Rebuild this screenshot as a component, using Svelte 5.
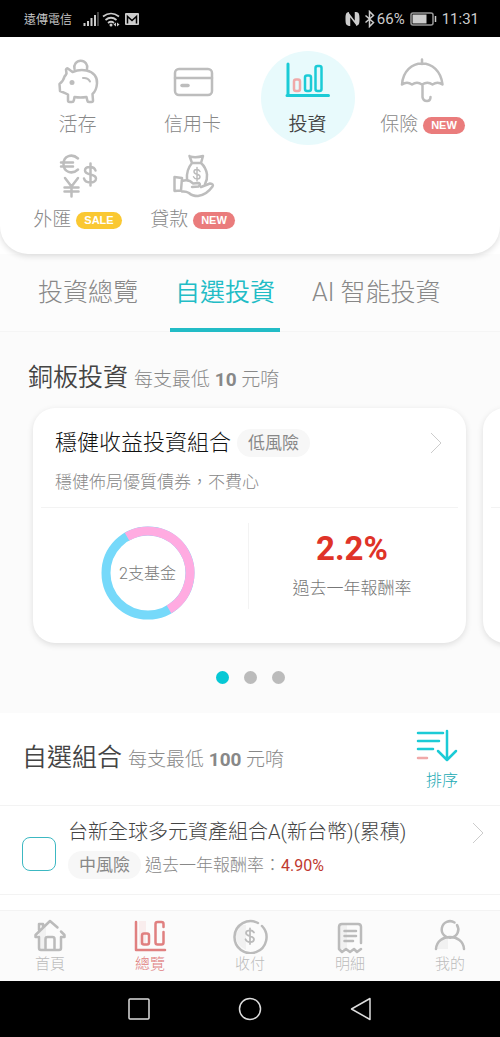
<script lang="ts">
	const services = [
		{ id: 'deposit', name: '活存' },
		{ id: 'card', name: '信用卡' },
		{ id: 'invest', name: '投資', active: true },
		{ id: 'insurance', name: '保險', badge: 'NEW' },
		{ id: 'forex', name: '外匯', badge: 'SALE' },
		{ id: 'loan', name: '貸款', badge: 'NEW' }
	];

	const tabs = ['投資總覽', '自選投資', 'AI 智能投資'];
	let activeTab = $state(1);
	let slide = $state(0);

	const funds = [
		{ id: 'fund-1', name: '台新全球多元資產組合A(新台幣)(累積)', risk: '中風險', rate: '4.90%' }
	];

	const navItems = [
		{ id: 'home', name: '首頁' },
		{ id: 'overview', name: '總覽' },
		{ id: 'pay', name: '收付' },
		{ id: 'detail', name: '明細' },
		{ id: 'me', name: '我的' }
	];
</script>

{#snippet chevron()}
	<svg class="chevron" viewBox="0 0 12 22" aria-hidden="true"><path d="M1 1l10 10L1 21" /></svg>
{/snippet}

<div class="app">
	<header class="status-bar">
		<div class="status-side">
			<span class="carrier">遠傳電信</span>
			<svg width="56" height="16" viewBox="0 0 56 16" aria-hidden="true">
				<path d="M1.5 12v3M5 10v5M8.5 7v8M12 4v11" stroke="#ccc" stroke-width="2" fill="none" />
				<path d="M15 1v14" stroke="#555" stroke-width="1.6" />
				<g fill="none" stroke="#ccc" stroke-width="1.7">
					<path d="M20 5.500q8-6 16 0M22.500 9q5.500-4.500 11 0M25 12q3-2.500 6 0" />
				</g>
				<circle cx="28" cy="14" r="1.500" fill="#ccc" />
				<path d="M33 11.500v4l-2.500-2zM34 11.500v4l2.500-2z" fill="#ccc" />
				<rect x="42" y="2" width="14" height="12" rx="1" fill="#ccc" />
				<path d="M44.500 12.500V5.500l4.500 4 4.500-4v7" fill="none" stroke="#000" stroke-width="1.500" />
			</svg>
		</div>
		<div class="status-side right">
			<svg width="32" height="18" viewBox="0 0 32 18" aria-hidden="true">
				<path d="M4 2C1 2.500.500 4 .500 9s.500 6 3.500 7zM11 2c3 .500 3.500 2 3.500 7s-.500 6-3.500 7z" fill="#ccc" />
				<path d="M4.500 16V5l6 8V2" fill="none" stroke="#ccc" stroke-width="1.500" />
				<path d="M20.500 5.500l8 7-4 4v-15l4 4-8 7" fill="none" stroke="#ccc" stroke-width="1.500" />
			</svg>
			<span>66%</span>
			<svg class="battery" width="27" height="14" viewBox="0 0 27 14" aria-hidden="true">
				<rect x="1" y="1" width="22" height="12" rx="2" fill="none" stroke="#999" stroke-width="1.500" />
				<rect x="2.500" y="2.500" width="14" height="9" fill="#ccc" />
				<path d="M25.500 4v6" stroke="#ccc" stroke-width="1.500" />
			</svg>
			<span>11:31</span>
		</div>
	</header>

	<nav class="services">
		{#each services as item}
			<a href="#{item.id}" class="service" class:active={item.active}>
				<svg class="service-icon" viewBox="0 0 48 48" aria-hidden="true">
					{#if item.id === 'deposit'}
						<path d="M20.500 12a6.500 6.500 0 1 1 12.500 0" />
						<path d="M12 12.500q.5-2 2.500-.5l4 3q7-3 14-1.500c7.500 1.500 11 7 10.500 13-.4 5-2 8.500-4.500 10.500l.5 6.500q0 1.500-1.500 1.500H35q-1.500 0-1.700-1.500L32.500 40q-6 1-12 0l-.7 3.500q-.3 1.500-1.800 1.500h-2.500q-1.500 0-1.500-1.500V37.500c-3-1.500-5.500-2.500-8-3.500L5.500 27q4-3 5-7.500 1.500-1.500 2-3z" />
						<circle class="fill" cx="18" cy="25.500" r="2.500" />
						<path d="M29 21q5-.5 7 3.500" stroke-width="2" />
					{:else if item.id === 'card'}
						<rect x="6" y="12" width="37" height="26" rx="4" />
						<path d="M6 21h37" />
						<path d="M13 28.500h6" stroke-width="3.500" />
					{:else if item.id === 'invest'}
						<path d="M4 7v31.500M3 38.500h41.500" stroke-width="3" />
						<rect class="accent" x="10" y="22.500" width="6" height="11.500" rx="2" />
						<rect x="21" y="18.500" width="6" height="15.500" rx="2" />
						<rect x="31.500" y="9" width="6" height="25" rx="2" />
					{:else if item.id === 'insurance'}
						<path d="M23 2.500V7M3 27.500C4 14 13 6.500 23 6.500s19 7.500 20.500 21q-5-3.500-10 0-5-3.500-10.500 0-5-3.500-10 0-5-3.500-10 0zM23.500 28v12q.5 4 4.500 4 3.500 0 3.500-4" />
					{:else if item.id === 'forex'}
						<path d="M24 6.500C18 1 9.500 4 9.500 12S18 23 24 17.500M7 10.500h12M7 14.500h12" />
						<path d="M11 26l6.500 8.500L24 26M17.500 34.500v10M10.500 35.500h14M10.500 39.500h14" />
						<path d="M41.500 18.500C40 13.500 31 14 31 18.500c0 5.500 11 2.500 11 8 0 5-10.500 5.500-12 0M36.500 11.500v22" />
					{:else}
						<path d="M21 4.500q6 1.500 13-.5l-2 7q5 4.500 6 11.500.5 5-2 9.500M18 28q-1-10 5-17L20.500 4M23.500 11H32" />
						<path d="M5.500 25l7.500 1-1 12.500-6.500.5zM13 29q7-2.500 11 2.500l6-.5q2 1.500-.5 3.500l-6.500.5M32 35l9-3.500q4 .5 2.500 3-6 8.500-14.500 9.500-6 0-9-3-3-2-7-1.500" />
						<path d="M31 19.500C29.500 16.500 25 17 25 19.700c0 3.300 6 1.700 6 5 0 2.800-5 3.300-6.500 0M28 15.500v13.500" stroke-width="1.500" />
					{/if}
				</svg>
				<span class="service-label">
					{item.name}
					{#if item.badge}
						<span class="badge" class:sale={item.badge === 'SALE'}>{item.badge}</span>
					{/if}
				</span>
			</a>
		{/each}
	</nav>

	<main>
		<div class="tabs">
			{#each tabs as tab, i}
				<button class="tab" class:selected={activeTab === i} onclick={() => (activeTab = i)}>{tab}</button>
			{/each}
		</div>

		<section class="starter">
			<h2>銅板投資 <small>每支最低 <b>10</b> 元唷</small></h2>
			<div class="slides">
				<article class="card">
					<a href="#portfolio" class="card-head">
						<div class="card-title">
							<h3>穩健收益投資組合</h3>
							<span class="risk">低風險</span>
							{@render chevron()}
						</div>
						<p>穩健佈局優質債券，不費心</p>
					</a>
					<div class="card-body">
						<div class="chart">
							<svg viewBox="0 0 94 94" aria-hidden="true">
								<circle cx="47" cy="47" r="42" stroke="#76d9fa" />
								<circle cx="47" cy="47" r="42" stroke="#ffabe1" pathLength="100" stroke-dasharray="50 50" transform="rotate(-120 47 47)" />
							</svg>
							<span>2支基金</span>
						</div>
						<div class="return">
							<strong>2.2%</strong>
							<span>過去一年報酬率</span>
						</div>
					</div>
				</article>
				<article class="card">
					<div class="card-head"></div>
				</article>
			</div>
			<div class="dots">
				{#each [0, 1, 2] as n}
					<button class="dot" class:on={slide === n} aria-label="第 {n + 1} 頁" onclick={() => (slide = n)}></button>
				{/each}
			</div>
		</section>

		<section class="picks">
			<div class="picks-head">
				<h2>自選組合 <small>每支最低 <b>100</b> 元唷</small></h2>
				<button class="sort">
					<svg width="42" height="34" viewBox="0 0 42 34" aria-hidden="true">
						<path d="M2 4h25M2 12h21M2 20h15M31 2v28M22 22l9 9 9-9" />
						<path class="accent" d="M2 29h9" />
					</svg>
					排序
				</button>
			</div>
			{#each funds as fund}
				<div class="fund">
					<input type="checkbox" id={fund.id} />
					<div class="fund-info">
						<label for={fund.id}>{fund.name}</label>
						<div class="fund-meta">
							<span class="risk">{fund.risk}</span>
							<span>過去一年報酬率：<em>{fund.rate}</em></span>
						</div>
					</div>
					<a href="#{fund.id}" aria-label={fund.name}>{@render chevron()}</a>
				</div>
			{/each}
		</section>
	</main>

	<nav class="bottom-nav">
		{#each navItems as item}
			<a href="#{item.id}" class:current={item.id === 'overview'}>
				<svg width="36" height="36" viewBox="0 0 36 36" aria-hidden="true">
					{#if item.id === 'home'}
						<path class="shade" d="M7 15l7-7v24H7z" />
						<path d="M25.500 9.500L18 3 3.500 17v2H7v11q0 2 2 2h18q2 0 2-2V19h3.500v-2L29 13.500M7 12V6h4v3M13.500 32V21q0-2 2-2h5q2 0 2 2v11" />
					{:else if item.id === 'overview'}
						<path class="shade" d="M7 3h7v24H7z" />
						<path d="M4 4v28H33" />
						<rect x="10" y="15.500" width="7" height="11" rx="2" />
						<path d="M31.500 9V6q0-2-2-2h-4q-2 0-2 2v18.500q0 2 2 2h4q2 0 2-2V14" />
					{:else if item.id === 'pay'}
						<path class="shade" d="M8 7h6v25q-11-5-10-15z" />
						<path d="M26 5A16 16 0 1 0 30 8" />
						<path d="M22 14.500C20 11 14 12 14 15c0 4 8 2 8 6.300 0 3.500-7 4-8.500 0M18 10.500v15.500" stroke-width="1.800" />
					{:else if item.id === 'detail'}
						<path class="shade" d="M8 7h7v24H8z" />
						<path d="M29 25V9q0-3-3-3H10Q7 6 7 9v22l3 3 4-3 4 3 4-3 3 3 4-3M12.500 13H24M12.500 18H24M12.500 23H21" />
					{:else}
						<path class="shade" d="M5 31q1-10 11-11v11z" />
						<path d="M22.500 4.500A8.300 8.300 0 1 0 25 7M4 31c1-16 27-16 28 0" />
					{/if}
				</svg>
				{item.name}
			</a>
		{/each}
	</nav>

	<footer class="system-bar">
		<button aria-label="Recent apps">
			<svg viewBox="0 0 24 24"><rect x="2" y="2" width="20" height="20" rx="1" /></svg>
		</button>
		<button aria-label="Home">
			<svg viewBox="0 0 24 24"><circle cx="12" cy="12" r="10.500" /></svg>
		</button>
		<button aria-label="Back">
			<svg viewBox="0 0 24 24"><path d="M21 1.500v21L2.500 12z" /></svg>
		</button>
	</footer>
</div>

<style>
	:global(body) {
		margin: 0;
		background: #fff;
	}

	.app {
		display: flex;
		flex-direction: column;
		min-height: 100vh;
		overflow: hidden;
		font-family: Roboto, 'Noto Sans CJK TC', sans-serif;
		font-weight: 300;
		color: #888;
	}

	a {
		color: inherit;
		text-decoration: none;
	}

	button {
		border: none;
		padding: 0;
		background: none;
		color: inherit;
		font: inherit;
		cursor: pointer;
	}

	h2,
	h3,
	p {
		margin: 0;
		font-weight: 300;
	}

	svg {
		display: block;
	}

	.status-bar {
		display: flex;
		justify-content: space-between;
		align-items: center;
		height: 37px;
		padding: 0 21px 0 24px;
		background: #000;
		color: #ccc;
		font-size: 15px;
		font-weight: 400;
	}

	.status-side {
		display: flex;
		align-items: center;
		gap: 11px;
	}

	.status-side.right {
		gap: 0;
	}

	.carrier {
		font-size: 12px;
		font-weight: 350;
	}

	.battery {
		margin: 0 5px;
	}

	.services {
		position: relative;
		display: grid;
		grid-template-columns: repeat(4, 1fr);
		row-gap: 1px;
		padding: 14px 20px;
		border-radius: 0 0 28px 28px;
		background: #fff;
		box-shadow: 0 2px 6px rgba(0, 0, 0, 0.14);
	}

	.service {
		display: flex;
		flex-direction: column;
		align-items: center;
		justify-self: center;
		box-sizing: border-box;
		min-width: 94px;
		height: 94px;
		padding-top: 6px;
	}

	.service-icon {
		width: 48px;
		height: 48px;
		fill: none;
		stroke: #bdbdbd;
		stroke-width: 2.5;
		stroke-linecap: round;
		stroke-linejoin: round;
	}

	.service-icon .fill {
		fill: #bdbdbd;
		stroke: none;
	}

	.service.active {
		border-radius: 50%;
		background: #e8fafc;
		color: #444;
		font-weight: 350;
	}

	.active .service-icon {
		stroke: #1bcbd6;
	}

	.service-icon .accent {
		stroke: #f0a9a9;
	}

	.service-label {
		display: flex;
		align-items: center;
		gap: 5px;
		margin-top: 8px;
		font-size: 19px;
		line-height: 24px;
		white-space: nowrap;
	}

	.badge {
		padding: 0 8px;
		border-radius: 9px;
		background: #ea7c7c;
		color: #fff;
		font-family: 'Liberation Sans', sans-serif;
		font-size: 11px;
		font-weight: 700;
		line-height: 17px;
	}

	.badge.sale {
		background: #fac832;
	}

	main {
		flex: 1;
	}

	.tabs {
		display: flex;
		gap: 27px;
		padding-left: 33px;
		border-bottom: 1px solid #f5f5f5;
		background: #fcfcfc;
	}

	.tab {
		height: 78px;
		margin-bottom: -1px;
		padding: 0 5px 3px;
		border-bottom: 4px solid transparent;
		font-size: 25px;
		white-space: nowrap;
	}

	.tab.selected {
		border-bottom-color: #22bcc6;
		color: #22bcc6;
		font-weight: 350;
	}

	h2 {
		color: #444;
		font-size: 25px;
		font-weight: 350;
		line-height: 36px;
	}

	h2 small {
		color: #888;
		font-size: 19px;
		font-weight: 300;
	}

	h2 b {
		font-weight: 700;
	}

	.starter {
		padding-top: 28px;
		background: #fbfbfb;
	}

	.starter h2 {
		padding-left: 28px;
	}

	.slides {
		display: flex;
		gap: 17px;
		padding: 10px 34px 0 33px;
	}

	.card {
		flex: 0 0 100%;
		box-sizing: border-box;
		padding: 0 8px;
		border-radius: 22px;
		background: #fff;
		box-shadow: 0 2px 6px rgba(0, 0, 0, 0.12);
	}

	.card-head {
		display: block;
		box-sizing: border-box;
		height: 100px;
		padding: 18px 14px 0;
		border-bottom: 1px solid #f3f3f3;
	}

	.card-title {
		display: flex;
		align-items: center;
		gap: 6px;
	}

	h3 {
		color: #111;
		font-size: 22px;
		line-height: 34px;
	}

	.card-head p {
		margin-top: 9px;
		font-size: 17px;
		line-height: 26px;
	}

	.chevron {
		width: 12px;
		height: 22px;
		margin-left: auto;
		fill: none;
		stroke: #ccc;
	}

	.card-title .chevron {
		margin-right: 2px;
	}

	.risk {
		padding: 0 11px;
		border-radius: 14px;
		background: #f7f7f7;
		font-size: 17px;
		font-weight: 400;
		line-height: 28px;
	}

	.card-body {
		display: grid;
		grid-template-columns: 1fr 1fr;
		align-items: start;
		padding: 15px 3px 23px 0;
		color: #777;
	}

	.chart {
		display: grid;
		place-items: center;
		margin: 3px 0 0 6px;
		font-size: 16px;
	}

	.chart > * {
		grid-area: 1 / 1;
	}

	.chart svg {
		width: 94px;
		fill: none;
		stroke-width: 9;
	}

	.chart span {
		margin-bottom: 3px;
	}

	.return {
		display: flex;
		flex-direction: column;
		align-items: center;
		height: 86px;
		border-left: 1px solid #f3f3f3;
		font-size: 17px;
		line-height: 26px;
	}

	.return strong {
		margin: 4px 0;
		color: #df3328;
		font-size: 33px;
		font-weight: 700;
		line-height: 44px;
	}

	.dots {
		display: flex;
		justify-content: center;
		gap: 15px;
		padding: 28px 0 29px;
	}

	.dot {
		width: 13px;
		height: 13px;
		border-radius: 50%;
		background: #bbb;
	}

	.dot.on {
		background: #06c8d5;
	}

	.picks-head {
		display: flex;
		justify-content: space-between;
		align-items: center;
		height: 92px;
		padding: 0 42px 0 22px;
		border-bottom: 1px solid #f3f3f3;
	}

	.sort {
		display: flex;
		flex-direction: column;
		align-items: flex-end;
		gap: 6px;
		margin-top: 3px;
		color: #22aab4;
		font-size: 16px;
		line-height: 24px;
	}

	.sort svg {
		fill: none;
		stroke: #1bcbd6;
		stroke-width: 2.5;
		stroke-linecap: round;
		stroke-linejoin: round;
	}

	.sort .accent {
		stroke: #f0a9a9;
	}

	.fund {
		display: flex;
		align-items: center;
		height: 88px;
		padding: 0 16px 0 22px;
		border-bottom: 1px solid #f3f3f3;
	}

	.fund input {
		flex: none;
		appearance: none;
		width: 34px;
		height: 34px;
		margin: 8px 12px 0 0;
		border: 1px solid #3cb8c2;
		border-radius: 8px;
	}

	.fund input:checked {
		background: #1bcbd6;
	}

	.fund-info {
		flex: 1;
		padding-bottom: 3px;
	}

	.fund-info label {
		display: block;
		color: #444;
		font-size: 20px;
		line-height: 28px;
		white-space: nowrap;
	}

	.fund-meta {
		display: flex;
		align-items: center;
		gap: 4px;
		margin-top: 5px;
		font-size: 17px;
		line-height: 26px;
	}

	em {
		color: #c0392f;
		font-size: 16px;
		font-style: normal;
		font-weight: 400;
	}

	.fund a {
		padding-bottom: 34px;
	}

	.bottom-nav {
		display: grid;
		grid-template-columns: repeat(5, 1fr);
		height: 70px;
		border-top: 1px solid #f3f3f3;
		background: #fbfbfb;
		color: #bbb;
		font-size: 15px;
		line-height: 20px;
	}

	.bottom-nav a {
		display: flex;
		flex-direction: column;
		align-items: center;
		padding-top: 7px;
	}

	.bottom-nav svg {
		fill: none;
		stroke: #bbb;
		stroke-width: 2.5;
		stroke-linecap: round;
		stroke-linejoin: round;
	}

	.bottom-nav .shade {
		fill: #f1f1f1;
		stroke: none;
	}

	.bottom-nav .current {
		color: #e08080;
	}

	.bottom-nav .current svg {
		stroke: #e08080;
	}

	.bottom-nav .current .shade {
		fill: #f9eded;
	}

	.system-bar {
		display: flex;
		justify-content: center;
		align-items: center;
		gap: 87px;
		height: 56px;
		background: #000;
	}

	.system-bar svg {
		width: 24px;
		height: 24px;
		fill: none;
		stroke: #ddd;
		stroke-width: 1.5;
		stroke-linejoin: round;
	}
</style>
